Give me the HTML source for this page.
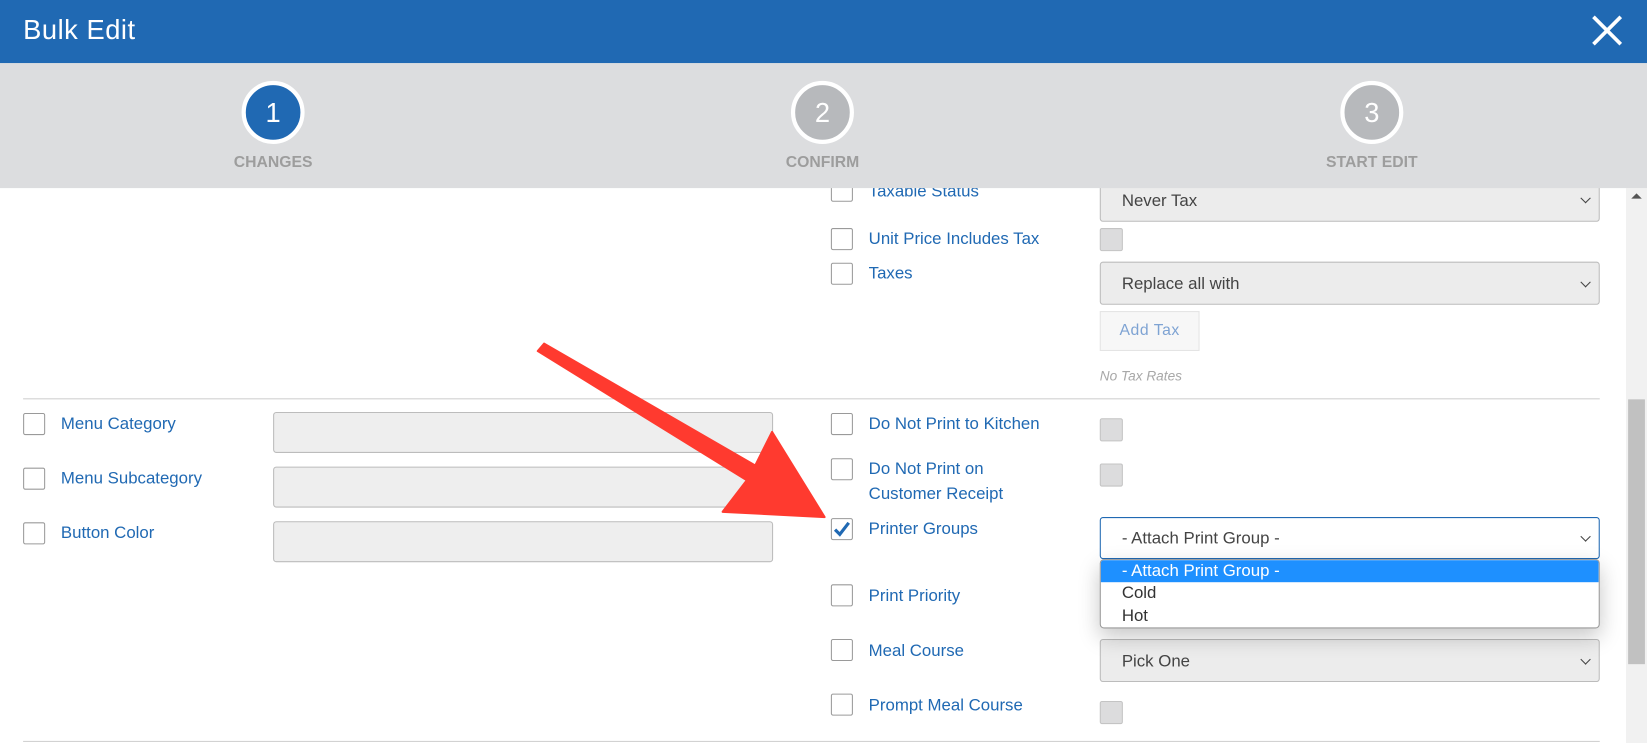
<!DOCTYPE html>
<html><head><meta charset="utf-8"><style>
html,body{margin:0;padding:0;width:1647px;height:743px;overflow:hidden;background:#fff;font-family:"Liberation Sans",sans-serif}
#w{position:absolute;left:0;top:0;width:1568px;height:707px;transform:scale(1.0504,1.0509);transform-origin:0 0;background:#fff;overflow:hidden}
.a{position:absolute}
.hdr{left:0;top:0;width:1568px;height:60px;background:#2069b3}
.title{left:22px;top:13px;color:#fff;font-size:26px;letter-spacing:.5px}
.band{left:0;top:60px;width:1568px;height:119px;background:#dcdddf}
.circ{width:52px;height:52px;border:4px solid #fff;border-radius:50%;color:#fff;font-size:26px;text-align:center;line-height:52px}
.lbl{font-size:15px;font-weight:bold;color:#9d9d9d;width:200px;text-align:center}
.cb{width:19px;height:19px;border:1px solid #9a9a9a;border-radius:2px;background:#fff}
.t{color:#2069b3;font-size:16px;line-height:24px}
.sel{width:476px;border:1px solid #bcbcbc;border-radius:3px;background:#ececec;color:#444;font-size:16px;box-sizing:border-box;padding-left:20px}
.sel:after{content:"";position:absolute;right:9px;top:50%;width:6px;height:6px;border-right:1.5px solid #444;border-bottom:1.5px solid #444;transform:translateY(-70%) rotate(45deg)}
.sq{width:20px;height:20px;border:1px solid #c4c4c4;border-radius:2px;background:#dcdcdd}
.inp{left:260px;width:476px;height:39px;background:#eeeeee;border:1px solid #bcbcbc;border-radius:3px;box-sizing:border-box}
.hr{height:1px;background:#cfcfcf;left:22px;width:1501px}
</style></head><body><div id="w">

<!-- content -->
<div class="a cb" style="left:791px;top:171px"></div>
<div class="a t" style="left:827px;top:171px">Taxable Status</div>
<div class="a sel" style="left:1047px;top:169px;height:42px;line-height:44px">Never Tax</div>
<div class="a cb" style="left:791px;top:217px"></div>
<div class="a t" style="left:827px;top:216px">Unit Price Includes Tax</div>
<div class="a sq" style="left:1047px;top:217px"></div>
<div class="a cb" style="left:791px;top:250px"></div>
<div class="a t" style="left:827px;top:249px">Taxes</div>
<div class="a sel" style="left:1047px;top:249px;height:41px;line-height:41px">Replace all with</div>
<div class="a" style="left:1047px;top:296px;width:95px;height:38px;background:#f7f7f7;border:1px solid #e4e4e4;box-sizing:border-box;color:#7ea3d3;font-size:15px;line-height:36px;text-align:center;letter-spacing:.5px">Add Tax</div>
<div class="a" style="left:1047px;top:350px;color:#a8a8a8;font-size:13px;font-style:italic">No Tax Rates</div>
<div class="a hr" style="top:379px"></div>

<div class="a cb" style="left:22px;top:393px"></div><div class="a t" style="left:58px;top:392px">Menu Category</div>
<div class="a inp" style="top:392px"></div>
<div class="a cb" style="left:22px;top:445px"></div><div class="a t" style="left:58px;top:444px">Menu Subcategory</div>
<div class="a inp" style="top:444px"></div>
<div class="a cb" style="left:22px;top:497px"></div><div class="a t" style="left:58px;top:496px">Button Color</div>
<div class="a inp" style="top:496px"></div>

<div class="a cb" style="left:791px;top:393px"></div><div class="a t" style="left:827px;top:392px">Do Not Print to Kitchen</div>
<div class="a sq" style="left:1047px;top:398px"></div>
<div class="a cb" style="left:791px;top:436px"></div><div class="a t" style="left:827px;top:435px">Do Not Print on<br>Customer Receipt</div>
<div class="a sq" style="left:1047px;top:441px"></div>
<div class="a cb" style="left:791px;top:493px"><svg width="19" height="19" style="position:absolute;left:0;top:0"><path d="M3 10 L7.5 14.5 L16 3.5" fill="none" stroke="#2069b3" stroke-width="3"/></svg></div>
<div class="a t" style="left:827px;top:492px">Printer Groups</div>
<div class="a sel" style="left:1047px;top:492px;height:40px;line-height:40px;background:#fff;border-color:#2069b3">- Attach Print Group -</div>
<div class="a cb" style="left:791px;top:556px"></div><div class="a t" style="left:827px;top:556px">Print Priority</div>
<div class="a cb" style="left:791px;top:608px"></div><div class="a t" style="left:827px;top:608px">Meal Course</div>
<div class="a sel" style="left:1047px;top:608px;height:41px;line-height:41px">Pick One</div>
<div class="a cb" style="left:791px;top:660px"></div><div class="a t" style="left:827px;top:660px">Prompt Meal Course</div>
<div class="a sq" style="left:1047px;top:667px"></div>
<div class="a hr" style="top:705px"></div>

<!-- dropdown -->
<div class="a" style="left:1047px;top:532px;width:476px;height:66px;background:#fff;border:1px solid #9a9a9a;border-radius:4px;box-sizing:border-box;box-shadow:0 8px 20px rgba(0,0,0,.22);overflow:hidden;font-size:16px;color:#333">
<div style="background:#1e90ff;color:#fff;height:21px;line-height:21px;padding-left:20px">- Attach Print Group -</div>
<div style="height:22px;line-height:22px;padding-left:20px">Cold</div>
<div style="height:22px;line-height:22px;padding-left:20px">Hot</div>
</div>

<!-- arrow -->
<svg class="a" style="left:0;top:0" width="1568" height="707"><polygon points="518,327 719,443 735,411 785,492 688,487 711,457 512,334" fill="#ff3a2f" stroke="#ff3a2f" stroke-width="2" stroke-linejoin="round"/></svg>

<!-- scrollbar -->
<div class="a" style="left:1548px;top:179px;width:20px;height:528px;background:#f1f1f1"></div>
<div class="a" style="left:1553px;top:184px;width:0;height:0;border-left:5px solid transparent;border-right:5px solid transparent;border-bottom:5px solid #555"></div>
<div class="a" style="left:1550px;top:380px;width:16px;height:252px;background:#c1c1c1"></div>

<div class="a band"></div>
<div class="a circ" style="left:230px;top:77px;background:#2069b3">1</div>
<div class="a circ" style="left:753px;top:77px;background:#b7b9bc">2</div>
<div class="a circ" style="left:1276px;top:77px;background:#b7b9bc">3</div>
<div class="a lbl" style="left:160px;top:146px">CHANGES</div>
<div class="a lbl" style="left:683px;top:146px">CONFIRM</div>
<div class="a lbl" style="left:1206px;top:146px">START EDIT</div>

<div class="a hdr"></div>
<div class="a title">Bulk Edit</div>
<svg class="a" style="left:1514px;top:14px" width="32" height="30"><path d="M3 2 L29 28 M29 2 L3 28" stroke="#fff" stroke-width="3.5"/></svg>
</div></body></html>
